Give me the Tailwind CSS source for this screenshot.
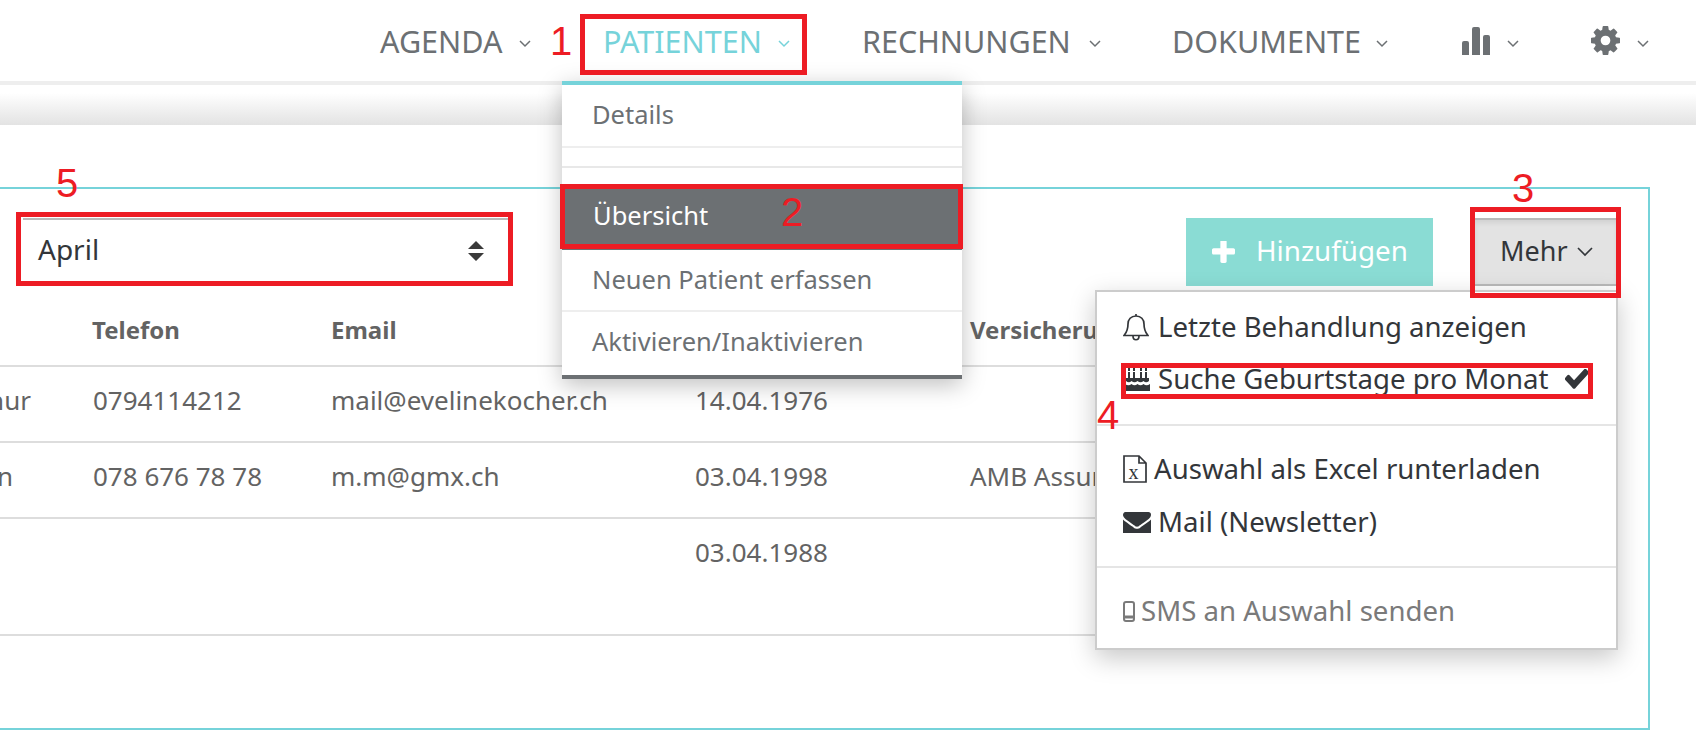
<!doctype html>
<html lang="de">
  <head>
    <meta charset="utf-8" />
    <title>Patienten</title>
    <script src="https://cdn.jsdelivr.net/npm/@tailwindcss/browser@4"></script>
  </head>
  <body class="bg-white">
    <div class="relative w-[1696px] h-[753px] overflow-hidden bg-white font-['Noto_Sans',sans-serif] text-[#6c7073]">
      <!-- top nav -->
      <header class="h-[81px] flex items-center text-[30.5px]">
        <nav class="flex items-center pl-[380px]">
          <a class="w-[123px] mt-[2px] whitespace-nowrap">AGENDA</a>
          <svg class="ml-[16px] mt-[6px] w-[12px] h-[8px]" viewBox="0 0 12 8" fill="none" stroke="currentColor" stroke-width="1.5"><path d="M1 1l5 5 5-5" /></svg>
          <a class="ml-[72px] w-[157px] mt-[2px] whitespace-nowrap text-[#76d3da]">PATIENTEN</a>
          <svg class="ml-[18px] mt-[6px] w-[12px] h-[8px] text-[#76d3da]" viewBox="0 0 12 8" fill="none" stroke="currentColor" stroke-width="1.5"><path d="M1 1l5 5 5-5" /></svg>
          <a class="ml-[72px] w-[209px] mt-[2px] whitespace-nowrap">RECHNUNGEN</a>
          <svg class="ml-[18px] mt-[6px] w-[12px] h-[8px]" viewBox="0 0 12 8" fill="none" stroke="currentColor" stroke-width="1.5"><path d="M1 1l5 5 5-5" /></svg>
          <a class="ml-[71px] w-[187px] mt-[2px] whitespace-nowrap">DOKUMENTE</a>
          <svg class="ml-[17px] mt-[6px] w-[12px] h-[8px]" viewBox="0 0 12 8" fill="none" stroke="currentColor" stroke-width="1.5"><path d="M1 1l5 5 5-5" /></svg>
          <svg class="ml-[74px] w-[28px] h-[28px]" viewBox="0 0 28 28" fill="currentColor"><path d="M0 16q0-2 2-2h3q2 0 2 2v12H0zM10 2q0-2 2-2h4q2 0 2 2v26h-8zM21 10q0-2 2-2h3q2 0 2 2v18h-7z" /></svg>
          <svg class="ml-[17px] mt-[6px] w-[12px] h-[8px]" viewBox="0 0 12 8" fill="none" stroke="currentColor" stroke-width="1.5"><path d="M1 1l5 5 5-5" /></svg>
          <svg class="ml-[72px] w-[29px] h-[29px]" viewBox="128 128 1536 1536" fill="currentColor"><path d="M1152 896q0-106-75-181t-181-75-181 75-75 181 75 181 181 75 181-75 75-181zm512-109v222q0 12-8 23t-20 13l-185 28q-19 54-39 91 35 50 107 138 10 12 10 25t-9 23q-27 37-99 108t-94 71q-12 0-26-9l-138-108q-44 23-91 38-16 136-29 186-7 28-36 28h-222q-14 0-24.5-8.5t-11.5-21.5l-28-184q-49-16-90-37l-141 107q-10 9-25 9-14 0-25-11-126-114-165-168-7-10-7-23 0-12 8-23 15-21 51-66.5t54-70.5q-27-50-41-99l-183-27q-13-2-21-12.5t-8-23.5v-222q0-12 8-23t19-13l186-28q14-46 39-92-40-57-107-138-10-12-10-24 0-10 9-23 26-36 98.5-107.5t94.5-71.5q13 0 26 10l138 107q44-23 91-38 16-136 29-186 7-28 36-28h222q14 0 24.5 8.5t11.5 21.5l28 184q49 16 90 37l142-107q9-9 24-9 13 0 25 10 129 119 165 170 7 8 7 22 0 12-8 23-15 21-51 66.5t-54 70.5q26 50 41 98l183 28q13 2 21 12.5t8 23.5z" /></svg>
          <svg class="ml-[17px] mt-[6px] w-[12px] h-[8px]" viewBox="0 0 12 8" fill="none" stroke="currentColor" stroke-width="1.5"><path d="M1 1l5 5 5-5" /></svg>
        </nav>
      </header>
      <div class="h-[4px] bg-[#eeeeee]"></div>
      <div class="h-[40px] bg-gradient-to-b from-white from-20% to-[#e3e3e3]"></div>

      <!-- patient panel -->
      <main class="mt-[62px] -ml-[2px] w-[1652px] h-[543px] border-2 border-[#76d3da]">
        <div class="flex items-start h-[105px] pt-[29px]">
          <div class="ml-[23px] w-[487px] h-[64px] border-t-2 border-[#b9b9b9] flex items-center justify-between pl-[15px] pr-[26px] text-[28px] text-[#33363a]">
            <span class="-mt-[4px]">April</span>
            <svg class="w-[16px] h-[20px] text-[#3a3a3a]" viewBox="0 0 16 20" fill="currentColor"><path d="M8 0l8 8H0zM8 20l8-8H0z" /></svg>
          </div>
          <button class="ml-[676px] w-[247px] h-[68px] bg-[#8adcd4] text-white text-[27.8px] flex items-center pl-[26px]">
            <svg class="w-[23px] h-[23px]" viewBox="192 192 1408 1408" fill="currentColor"><path d="M1600 736v192q0 40-28 68t-68 28h-416v416q0 40-28 68t-68 28h-192q-40 0-68-28t-28-68v-416h-416q-40 0-68-28t-28-68v-192q0-40 28-68t68-28h416v-416q0-40 28-68t68-28h192q40 0 68 28t28 68v416h416q40 0 68 28t28 68z" /></svg>
            <span class="ml-[21px] -mt-[2px]">Hinzufügen</span>
          </button>
          <button class="ml-[42px] w-[142px] h-[68px] bg-[#e3e3e3] border-y-2 border-[#b9b9b9] text-[#33363a] text-[27px] flex items-center pl-[25px] shadow-[inset_0_3px_5px_rgba(0,0,0,0.08)]">
            <span class="-mt-[2px]">Mehr</span>
            <svg class="ml-[9px] w-[16px] h-[10px]" viewBox="0 0 16 10" fill="none" stroke="currentColor" stroke-width="1.7"><path d="M1 1l7 7 7-7" /></svg>
          </button>
        </div>
        <!-- table -->
        <div class="w-[1618px] overflow-hidden text-[26px] text-[#636363]">
          <div class="grid grid-cols-[92px_239px_364px_275px_1fr] h-[73px] border-b-2 border-[#dddddd] font-bold text-[24px] items-center pt-[1px]">
            <span></span><span>Telefon</span><span>Email</span><span>Geburtstag</span><span class="whitespace-nowrap">Versicherung</span>
          </div>
          <div class="grid grid-cols-[92px_239px_364px_275px_1fr] h-[76px] border-b-2 border-[#dddddd] pt-[14px]">
            <span class="flex justify-end w-[31px] whitespace-nowrap">Winterthur</span><span class="pl-[1px]">0794114212</span><span>mail@evelinekocher.ch</span><span>14.04.1976</span><span></span>
          </div>
          <div class="grid grid-cols-[92px_239px_364px_275px_1fr] h-[76px] border-b-2 border-[#dddddd] pt-[14px]">
            <span class="flex justify-end w-[13px] whitespace-nowrap">Bern</span><span class="pl-[1px]">078 676 78 78</span><span>m.m@gmx.ch</span><span>03.04.1998</span><span class="whitespace-nowrap">AMB Assurances</span>
          </div>
          <div class="grid grid-cols-[92px_239px_364px_275px_1fr] h-[117px] border-b-2 border-[#dddddd] pt-[14px]">
            <span></span><span></span><span></span><span>03.04.1988</span><span></span>
          </div>
        </div>
      </main>

      <!-- PATIENTEN dropdown -->
      <div class="absolute left-[562px] top-[81px] w-[400px] h-[298px] bg-white border-t-4 border-b-4 border-t-[#76d3da] border-b-[#6c7073] shadow-[0_6px_22px_rgba(0,0,0,0.25)] text-[25.5px]">
        <div class="h-[63px] border-b-2 border-[#eeeeee] pl-[30px] flex items-center pb-[3px]">Details</div>
        <div class="h-[20px] border-b-2 border-[#e8e8e8]"></div>
        <div class="h-[66px] mt-[16px] bg-[#6c7073] text-white pl-[31px] flex items-center pb-[4px]">Übersicht</div>
        <div class="h-[62px] border-b-2 border-[#eeeeee] pl-[30px] flex items-center pb-[2px]">Neuen Patient erfassen</div>
        <div class="h-[63px] pl-[30px] flex items-center pb-[4px]">Aktivieren/Inaktivieren</div>
      </div>

      <!-- Mehr menu -->
      <div class="absolute left-[1095px] top-[290px] w-[523px] h-[360px] bg-white border-2 border-[#cccccc] shadow-[0_8px_24px_rgba(0,0,0,0.22)] text-[27.6px] text-[#33363a]">
        <div class="h-[134px] border-b-2 border-[#e5e5e5] pl-[26px] pt-[15px] flex flex-col">
          <div class="flex items-center h-[40px]">
            <svg class="w-[26px] h-[29px]" viewBox="0 0 26 29" fill="none" stroke="currentColor" stroke-width="1.7"><path d="M13 3c-5 0-8 3.400-8 8 0 7-2 9-4 11.500h24c-2-2.500-4-4.500-4-11.500 0-4.600-3-8-8-8zM13 3V1M10 23c0 5 6 5 6 0" /></svg>
            <span class="ml-[9px] whitespace-nowrap">Letzte Behandlung anzeigen</span>
          </div>
          <div class="flex items-center h-[40px] mt-[12px]">
            <svg class="w-[25px] h-[24px] ml-[2px]" viewBox="0 0 25 24" fill="currentColor"><path d="M3 5h2v6H3zM8 5h2v6H8zM15 5h2v6h-2zM20 5h2v6h-2zM3 1h2v3H3zM8 1h2v3H8zM15 1h2v3h-2zM20 1h2v3h-2zM1 11h23v3q-3 2.500-5.500 0-3 2.500-6 0-3 2.500-6 0Q4 16.500 1 14zM0 17q3.500 2.500 6.500 0 3 2.500 6 0 3 2.500 6 0 3 2.500 6.500 0v7H0z" /></svg>
            <span class="ml-[8px] whitespace-nowrap">Suche Geburtstage pro Monat</span>
            <svg class="ml-[16px] w-[24px] h-[20px]" viewBox="130 350 1550 1180" fill="currentColor" preserveAspectRatio="none"><path d="M1671 566q0 40-28 68l-724 724-136 136q-28 28-68 28t-68-28l-136-136-362-362q-28-28-28-68t28-68l136-136q28-28 68-28t68 28l294 295 656-657q28-28 68-28t68 28l136 136q28 28 28 68z" /></svg>
          </div>
        </div>
        <div class="h-[142px] border-b-2 border-[#e5e5e5] pl-[26px] pt-[23px] flex flex-col">
          <div class="flex items-center h-[40px]">
            <svg class="w-[24px] h-[28px]" viewBox="0 0 24 28" fill="none" stroke="currentColor" stroke-width="1.7"><path d="M1 1h15l7 7v19H1zM16 1v7h7" /><text x="5.500" y="24" font-family="Liberation Serif" font-size="20" fill="currentColor" stroke="none">x</text></svg>
            <span class="ml-[7px] whitespace-nowrap">Auswahl als Excel runterladen</span>
          </div>
          <div class="flex items-center h-[40px] mt-[13px]">
            <svg class="w-[28px] h-[23px] -mt-[2px]" viewBox="0 128 1792 1408" fill="currentColor" preserveAspectRatio="none"><path d="M1792 710v794q0 66-47 113t-113 47h-1472q-66 0-113-47t-47-113v-794q44 49 101 87 362 246 497 345 57 42 92.5 65.5t94.5 48 110 24.5h2q51 0 110-24.5t94.5-48 92.5-65.5q170-123 498-345 57-39 100-87zm0-294q0 79-49 151t-122 123q-376 261-468 325-10 7-42.5 30.5t-54 38-52 32.5-57.5 27-50 9h-2q-23 0-50-9t-57.5-27-52-32.5-54-38-42.5-30.5q-91-64-262-182.5t-205-142.5q-62-42-117-115.5t-55-136.5q0-78 41.5-130t118.5-52h1472q65 0 112.5 47t47.5 113z" /></svg>
            <span class="ml-[7px] whitespace-nowrap">Mail (Newsletter)</span>
          </div>
        </div>
        <div class="pl-[26px] pt-[23px] text-[#7a7a7a]">
          <div class="flex items-center h-[40px]">
            <svg class="w-[12px] h-[21px]" viewBox="0 0 12 21" fill="none" stroke="currentColor" stroke-width="2"><rect x="1" y="1" width="10" height="19" rx="2" /><path d="M1 16h10" stroke-width="3" /></svg>
            <span class="ml-[6px] whitespace-nowrap">SMS an Auswahl senden</span>
          </div>
        </div>
      </div>

      <!-- red annotations -->
      <div class="absolute left-[580px] top-[14px] w-[227px] h-[61px] border-[5px] border-[#ed1c24]"></div>
      <div class="absolute left-[560px] top-[184px] w-[403px] h-[65px] border-[5px] border-[#ed1c24]"></div>
      <div class="absolute left-[1470px] top-[207px] w-[151px] h-[91px] border-[5px] border-[#ed1c24]"></div>
      <div class="absolute left-[1121px] top-[363px] w-[472px] h-[36px] border-[5px] border-[#ed1c24]"></div>
      <div class="absolute left-[16px] top-[212px] w-[497px] h-[74px] border-[5px] border-[#ed1c24]"></div>
      <span class="absolute left-[550px] top-[18px] text-[#ed1c24] text-[40px] leading-[46px] font-['Liberation_Sans',sans-serif]">1</span>
      <span class="absolute left-[781px] top-[189px] text-[#ed1c24] text-[40px] leading-[46px] font-['Liberation_Sans',sans-serif]">2</span>
      <span class="absolute left-[1512px] top-[165px] text-[#ed1c24] text-[40px] leading-[46px] font-['Liberation_Sans',sans-serif]">3</span>
      <span class="absolute left-[1097px] top-[392px] text-[#ed1c24] text-[40px] leading-[46px] font-['Liberation_Sans',sans-serif]">4</span>
      <span class="absolute left-[56px] top-[160px] text-[#ed1c24] text-[40px] leading-[46px] font-['Liberation_Sans',sans-serif]">5</span>
    </div>
  </body>
</html>
